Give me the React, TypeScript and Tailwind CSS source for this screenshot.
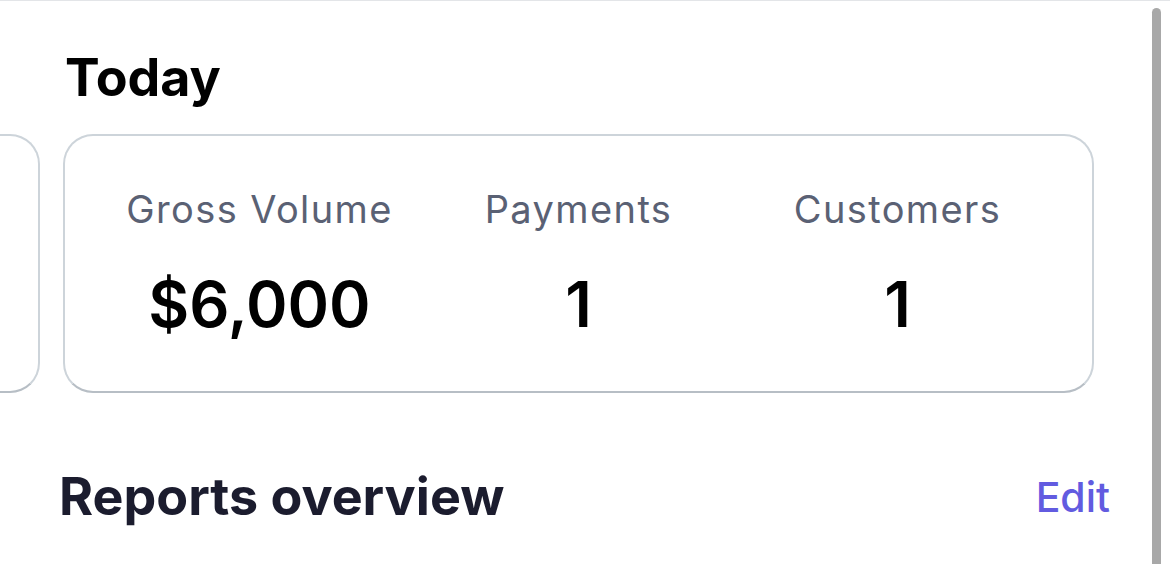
const stats = [
  { label: 'Gross Volume', value: '$6,000' },
  { label: 'Payments', value: '1' },
  { label: 'Customers', value: '1' },
];

const StatCard = ({ items }: { items: { label: string; value: string }[] }) => (
  <div className="grid grid-cols-3 rounded-[30px] border-2 border-[#cdd4da] border-b-[#b7bec5] bg-white px-[35px] pt-[55px] pb-[56px]">
    {items.map((s) => (
      <div key={s.label} className="flex flex-col items-center gap-[45px]">
        <span className="text-[38px] leading-[37px] tracking-[1.4px] text-[#5a6174]">{s.label}</span>
        <span className="text-[63px] leading-[62px] font-semibold text-black">{s.value}</span>
      </div>
    ))}
  </div>
);

const App = () => {
  return (
    <div
      className="relative h-[564px] w-full overflow-hidden border-t border-[#e3e5e8] bg-white"
      style={{ fontFamily: 'Inter, "Noto Sans", sans-serif' }}
    >
      {/* carousel of day cards, previous one peeking in from the left */}
      <div className="flex gap-[23px] pt-[51px]">
        <div className="-ml-[989px] flex w-[1029px] shrink-0 flex-col">
          <h2 className="h-[52px] text-[52px] leading-[52px] font-bold text-black">Yesterday</h2>
          <div className="mt-[30px]">
            <StatCard items={stats} />
          </div>
        </div>
        <div className="flex w-[1031px] shrink-0 flex-col">
          <h2 className="pl-[2px] text-[52px] leading-[52px] font-bold text-black">Today</h2>
          <div className="mt-[30px]">
            <StatCard items={stats} />
          </div>
        </div>
      </div>

      <div className="mt-[77px] flex items-center justify-between pr-[60px] pl-[59px]">
        <h2 className="text-[52px] leading-[54px] font-bold text-[#1b1c2e]">Reports overview</h2>
        <button className="text-[41px] leading-[41px] font-medium text-[#625be0]">Edit</button>
      </div>

      {/* scroll indicator */}
      <div className="absolute top-[7px] right-[9px] h-[600px] w-[9px] rounded-full bg-[#a8a8a8]" />
    </div>
  );
};

export default App;
